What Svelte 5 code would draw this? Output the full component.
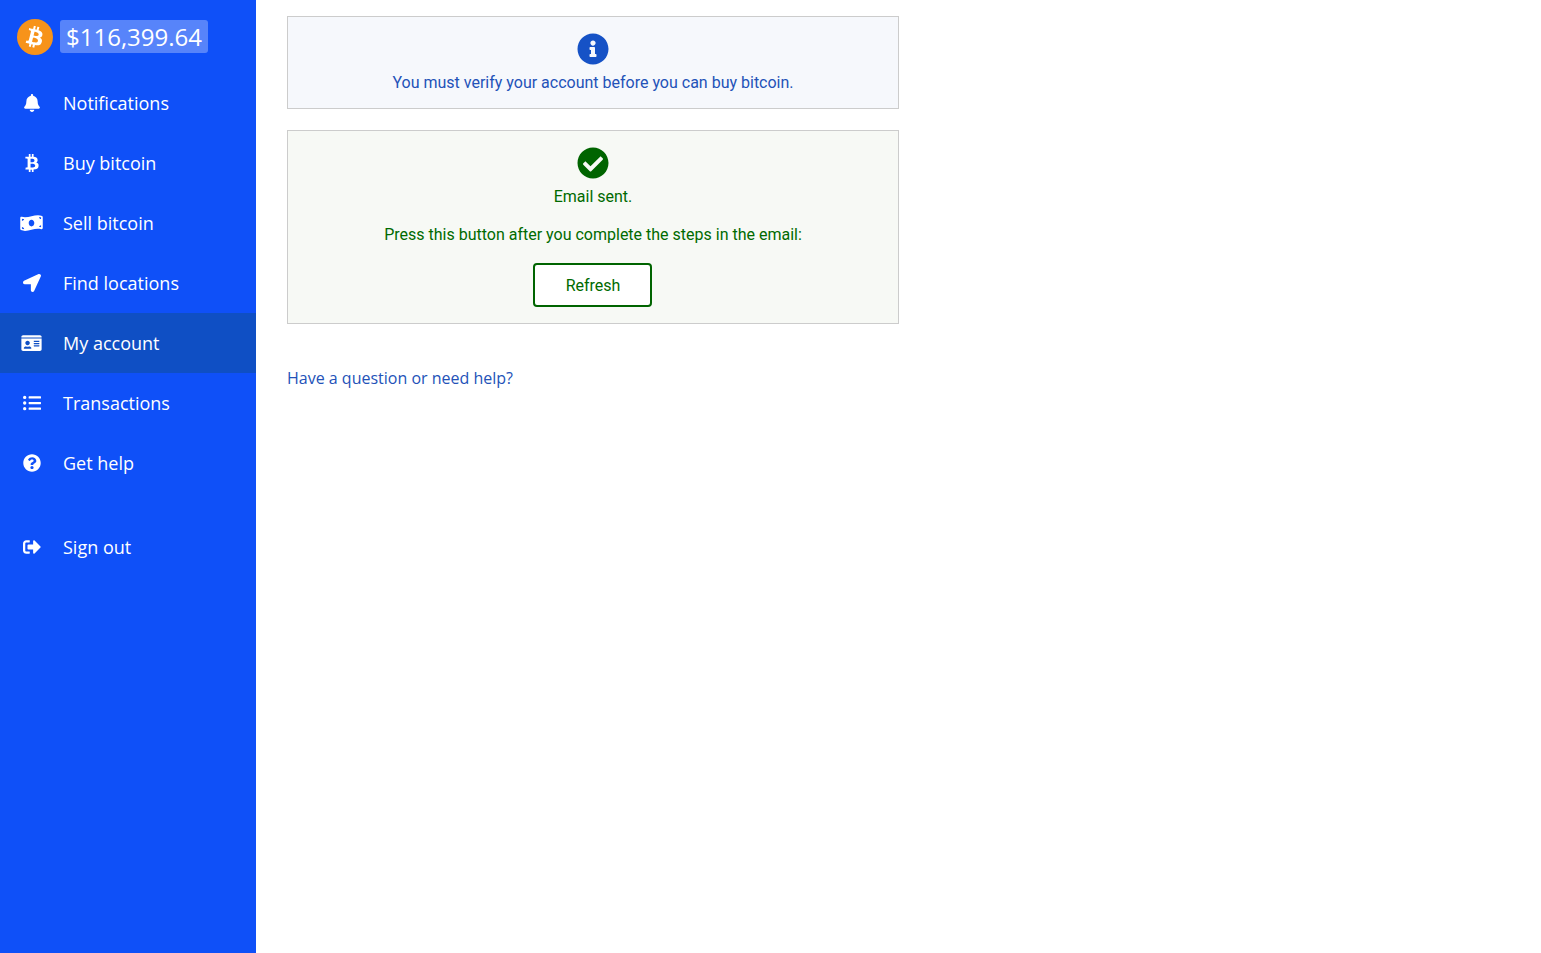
<script lang="ts">
  const btc =
    "M310.204 242.638c27.73-14.18 45.377-39.39 41.28-81.3-5.358-57.351-52.458-76.573-114.85-81.929V0h-48.528v77.203c-12.605 0-25.525.315-38.444.63V0h-48.528v79.409c-17.842.539-38.622.276-97.37 0v51.678c38.314-.678 58.417-3.14 63.023 21.427v217.429c-2.925 19.492-18.524 16.685-53.255 16.071L3.765 443.68c88.481 0 97.37.315 97.37.315V512h48.528v-67.06c13.234.315 26.154.315 38.444.315V512h48.528v-68.005c81.299-4.412 135.647-24.894 142.895-101.467 5.671-61.446-23.32-88.862-69.326-99.89zM150.608 134.553c27.415 0 113.126-8.507 113.126 48.528 0 54.515-85.71 48.212-113.126 48.212v-96.74zm0 251.776V279.821c32.772 0 133.127-9.138 133.127 53.255-.001 60.186-100.355 53.253-133.127 53.253z";

  type Item = { label: string; vb: string; w: number; d: string; active?: boolean };

  const items: Item[] = [
    {
      label: "Notifications",
      vb: "0 0 448 512",
      w: 16,
      d: "M224 512c35.32 0 63.97-28.65 63.97-64H160.03c0 35.35 28.65 64 63.97 64zm215.39-149.71c-19.32-20.76-55.47-51.99-55.47-154.29 0-77.7-54.48-139.9-127.94-155.16V32c0-17.67-14.32-32-31.98-32s-31.98 14.33-31.98 32v20.84C118.56 68.1 64.08 130.3 64.08 208c0 102.3-36.15 133.53-55.47 154.29-6 6.45-8.66 14.16-8.61 21.71.11 16.4 12.98 32 32.1 32h383.8c19.12 0 32-15.6 32.1-32 .05-7.55-2.61-15.27-8.61-21.71z",
    },
    { label: "Buy bitcoin", vb: "0 0 384 512", w: 14, d: btc },
    {
      label: "Sell bitcoin",
      vb: "0 0 640 512",
      w: 23,
      d: "M621.16 54.46C582.37 38.19 543.55 32 504.75 32c-123.17-.01-246.33 62.34-369.5 62.34-30.89 0-61.76-3.92-92.65-13.72-3.47-1.1-6.95-1.62-10.35-1.62C15.04 79 0 92.32 0 110.81v317.26c0 12.63 7.23 24.6 18.84 29.46C57.63 473.81 96.45 480 135.25 480c123.17 0 246.34-62.35 369.51-62.35 30.89 0 61.76 3.92 92.65 13.72 3.47 1.1 6.95 1.62 10.35 1.62 17.21 0 32.25-13.32 32.25-31.81V83.93c-.01-12.64-7.24-24.6-18.85-29.47zM48 132.22c20.12 5.04 41.12 7.57 62.72 8.93C104.84 170.54 79 192.69 48 192.69v-60.47zm0 285v-47.78c34.37 0 62.18 27.27 63.71 61.4-22.53-1.81-43.59-6.31-63.71-13.62zM320 352c-44.19 0-80-42.99-80-96 0-53.02 35.82-96 80-96s80 42.98 80 96c0 53.03-35.83 96-80 96zm272 27.78c-17.52-4.39-35.71-6.85-54.32-8.44 5.87-26.08 27.5-45.88 54.32-49.28v57.72zm0-236.11c-30.89-3.91-54.86-29.7-55.81-61.55 19.54 2.17 38.09 6.23 55.81 12.66v48.89z",
    },
    {
      label: "Find locations",
      vb: "0 0 512 512",
      w: 18,
      d: "M444.52 3.52L28.74 195.42c-47.97 22.39-31.98 92.75 19.19 92.75h175.91v175.91c0 51.17 70.36 67.17 92.75 19.19l191.9-415.78c15.99-38.39-25.59-79.97-63.97-63.97z",
    },
    {
      label: "My account",
      vb: "0 0 576 512",
      w: 21,
      active: true,
      d: "M528 32H48C21.5 32 0 53.5 0 80v16h576V80c0-26.5-21.5-48-48-48zM0 432c0 26.5 21.5 48 48 48h480c26.5 0 48-21.5 48-48V128H0v304zm352-232c0-4.4 3.6-8 8-8h144c4.4 0 8 3.6 8 8v16c0 4.4-3.6 8-8 8H360c-4.4 0-8-3.6-8-8v-16zm0 64c0-4.4 3.6-8 8-8h144c4.4 0 8 3.6 8 8v16c0 4.4-3.6 8-8 8H360c-4.4 0-8-3.6-8-8v-16zm0 64c0-4.4 3.6-8 8-8h144c4.4 0 8 3.6 8 8v16c0 4.4-3.6 8-8 8H360c-4.4 0-8-3.6-8-8v-16zM176 192c35.3 0 64 28.7 64 64s-28.7 64-64 64-64-28.7-64-64 28.7-64 64-64zM67.1 396.2C75.5 370.5 99.6 352 128 352h8.2c12.3 5.1 25.7 8 39.8 8s27.6-2.9 39.8-8h8.2c28.4 0 52.5 18.5 60.9 44.2 3.2 9.9-5.2 19.8-15.6 19.8H82.7c-10.4 0-18.8-10-15.6-19.8z",
    },
    {
      label: "Transactions",
      vb: "0 0 512 512",
      w: 18,
      d: "M48 48a48 48 0 1 0 48 48 48 48 0 0 0-48-48zm0 160a48 48 0 1 0 48 48 48 48 0 0 0-48-48zm0 160a48 48 0 1 0 48 48 48 48 0 0 0-48-48zm448 16H176a16 16 0 0 0-16 16v32a16 16 0 0 0 16 16h320a16 16 0 0 0 16-16v-32a16 16 0 0 0-16-16zm0-320H176a16 16 0 0 0-16 16v32a16 16 0 0 0 16 16h320a16 16 0 0 0 16-16V80a16 16 0 0 0-16-16zm0 160H176a16 16 0 0 0-16 16v32a16 16 0 0 0 16 16h320a16 16 0 0 0 16-16v-32a16 16 0 0 0-16-16z",
    },
    {
      label: "Get help",
      vb: "0 0 512 512",
      w: 18,
      d: "M504 256c0 136.997-111.043 248-248 248S8 392.997 8 256C8 119.083 119.043 8 256 8s248 111.083 248 248zM262.655 90c-54.497 0-89.255 22.957-116.549 63.758-3.536 5.286-2.353 12.415 2.715 16.258l34.699 26.31c5.205 3.947 12.621 3.008 16.665-2.122 17.864-22.658 30.113-35.797 57.303-35.797 20.429 0 45.698 13.148 45.698 32.958 0 14.976-12.363 22.667-32.534 33.976C247.128 238.528 216 254.941 216 296v4c0 6.627 5.373 12 12 12h56c6.627 0 12-5.373 12-12v-1.333c0-28.462 83.186-29.647 83.186-106.667 0-58.002-60.165-102-116.531-102zM256 338c-25.365 0-46 20.635-46 46 0 25.364 20.635 46 46 46s46-20.636 46-46c0-25.365-20.635-46-46-46z",
    },
  ];

  const signOut: Item = {
    label: "Sign out",
    vb: "0 0 512 512",
    w: 18,
    d: "M497 273L329 441c-15 15-41 4.5-41-17v-96H152c-13.3 0-24-10.7-24-24v-96c0-13.3 10.7-24 24-24h136V88c0-21.4 25.9-32 41-17l168 168c9.3 9.4 9.3 24.6 0 34zM192 436v-40c0-6.6-5.4-12-12-12H96c-17.7 0-32-14.3-32-32V160c0-17.7 14.3-32 32-32h84c6.6 0 12-5.4 12-12V76c0-6.6-5.4-12-12-12H96c-53 0-96 43-96 96v192c0 53 43 96 96 96h84c6.6 0 12-5.4 12-12z",
  };
</script>

{#snippet navRow(item: Item)}
  <a href="#top" class="nav-row" class:active={item.active}>
    <span class="nav-icon">
      <svg viewBox={item.vb} width={item.w} height="18" fill="currentColor" aria-hidden="true">
        <path d={item.d} />
      </svg>
    </span>
    <span>{item.label}</span>
  </a>
{/snippet}

<div class="layout">
  <nav class="sidebar">
    <div class="brand">
      <span class="coin">
        <svg viewBox="0 0 384 512" width="16" height="22" fill="#fff" aria-hidden="true">
          <path d={btc} />
        </svg>
      </span>
      <span class="price">$116,399.64</span>
    </div>

    {#each items as item (item.label)}
      {@render navRow(item)}
    {/each}

    <div class="nav-gap"></div>
    {@render navRow(signOut)}
  </nav>

  <main class="content">
    <section class="notice info">
      <svg class="notice-icon" viewBox="0 0 512 512" fill="currentColor" aria-hidden="true">
        <path d="M256 8C119.043 8 8 119.083 8 256c0 136.997 111.043 248 248 248s248-111.003 248-248C504 119.083 392.957 8 256 8zm0 110c23.196 0 42 18.804 42 42s-18.804 42-42 42-42-18.804-42-42 18.804-42 42-42zm56 254c0 6.627-5.373 12-12 12h-88c-6.627 0-12-5.373-12-12v-24c0-6.627 5.373-12 12-12h12v-64h-12c-6.627 0-12-5.373-12-12v-24c0-6.627 5.373-12 12-12h64c6.627 0 12 5.373 12 12v100h12c6.627 0 12 5.373 12 12v24z" />
      </svg>
      <p>You must verify your account before you can buy bitcoin.</p>
    </section>

    <section class="notice success">
      <svg class="notice-icon" viewBox="0 0 512 512" fill="currentColor" aria-hidden="true">
        <path d="M504 256c0 136.967-111.033 248-248 248S8 392.967 8 256 119.033 8 256 8s248 111.033 248 248zM227.314 387.314l184-184c6.248-6.248 6.248-16.379 0-22.627l-22.627-22.627c-6.248-6.249-16.379-6.249-22.628 0L216 308.118l-70.059-70.059c-6.248-6.248-16.379-6.248-22.628 0l-22.627 22.627c-6.248 6.248-6.248 16.379 0 22.627l104 104c6.249 6.249 16.379 6.249 22.628.001z" />
      </svg>
      <p>Email sent.</p>
      <p class="follow">Press this button after you complete the steps in the email:</p>
      <button type="button" class="refresh">Refresh</button>
    </section>

    <a href="#top" class="help">Have a question or need help?</a>
  </main>
</div>

<style>
  :global(body) {
    margin: 0;
    background: #fff;
  }

  .layout {
    display: flex;
    min-height: 100vh;
  }

  .sidebar {
    flex: 0 0 256px;
    background: #0f50f8;
    color: #fff;
    font-family: "Open Sans", sans-serif;
    font-size: 18px;
  }

  .brand {
    display: flex;
    align-items: center;
    gap: 7px;
    height: 73px;
    padding-left: 17px;
    box-sizing: border-box;
  }

  .coin {
    display: flex;
    align-items: center;
    justify-content: center;
    width: 36px;
    height: 36px;
    border-radius: 50%;
    background: #f7931a;
  }

  .coin svg {
    transform: rotate(14deg);
  }

  .price {
    padding: 0 6px;
    border-radius: 3px;
    background: rgba(255, 255, 255, 0.3);
    font-size: 24px;
    line-height: 33px;
  }

  .nav-row {
    display: flex;
    align-items: center;
    height: 60px;
    color: inherit;
    text-decoration: none;
  }

  .nav-row.active {
    background: #0f4fc4;
  }

  .nav-icon {
    display: flex;
    align-items: center;
    justify-content: center;
    flex: 0 0 63px;
  }

  .nav-gap {
    height: 24px;
  }

  .content {
    width: 612px;
    margin-left: 31px;
    padding-top: 16px;
    font-family: Roboto, sans-serif;
    font-size: 16px;
    line-height: 24px;
  }

  .notice {
    display: flex;
    flex-direction: column;
    align-items: center;
    padding: 16px 16px 13px;
    border: 1px solid #ccc;
    text-align: center;
  }

  .notice p {
    margin: 0;
  }

  .notice-icon {
    width: 32px;
    height: 32px;
    margin-bottom: 6px;
  }

  .info {
    background: #f6f8fc;
    color: #2352b8;
    margin-bottom: 21px;
  }

  .info .notice-icon {
    color: #1652c6;
  }

  .success {
    background: #f7f9f5;
    color: #006a00;
    padding-bottom: 16px;
  }

  .success .notice-icon {
    color: #006400;
  }

  .notice p.follow {
    margin-top: 14px;
  }

  .refresh {
    width: 119px;
    height: 44px;
    margin-top: 16px;
    margin-right: 1px;
    padding: 2px 0 0 1px;
    border: 2px solid #006400;
    border-radius: 4px;
    background: #fff;
    color: inherit;
    font: inherit;
  }

  .help {
    display: block;
    margin-top: 42px;
    color: #2352b8;
    font-family: "Open Sans", sans-serif;
    text-decoration: none;
  }
</style>
